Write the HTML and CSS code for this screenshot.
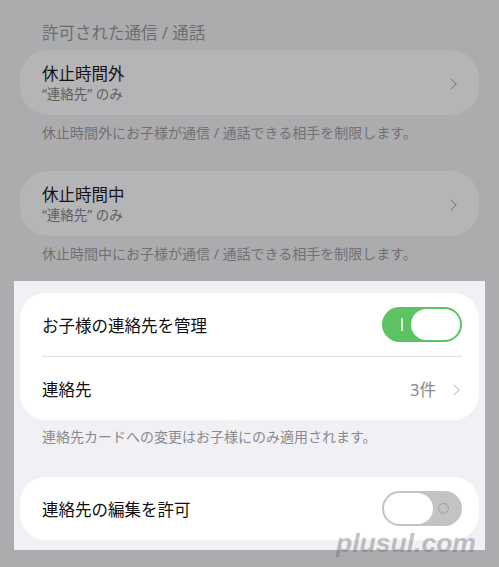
FILE: index.html
```html
<!DOCTYPE html>
<html lang="ja">
  <head>
    <meta charset="UTF-8" />
    <meta name="viewport" content="width=device-width, initial-scale=1.0" />
    <title>通信/通話の制限</title>
    <link rel="stylesheet" href="styles.css">
  </head>

  <body>
    <div class="screen">
      <!-- dimmed part of the settings page -->
      <section class="group dimmed">
        <h2 class="group-title">許可された通信 / 通話</h2>

        <div class="card nav-card">
          <div class="card-text">
            <div class="card-title">休止時間外</div>
            <div class="card-sub">“連絡先” のみ</div>
          </div>
          <span class="chevron"></span>
        </div>
        <p class="note">休止時間外にお子様が通信 / 通話できる相手を制限します。</p>

        <div class="card nav-card second">
          <div class="card-text">
            <div class="card-title">休止時間中</div>
            <div class="card-sub">“連絡先” のみ</div>
          </div>
          <span class="chevron"></span>
        </div>
        <p class="note">休止時間中にお子様が通信 / 通話できる相手を制限します。</p>
      </section>

      <!-- highlighted part -->
      <section class="group focus">
        <ul class="card list">
          <li class="row">
            <span class="row-label">お子様の連絡先を管理</span>
            <span class="switch on"><span class="knob"></span></span>
          </li>
          <li class="row">
            <span class="row-label">連絡先</span>
            <span class="row-value">3件</span>
            <span class="chevron light"></span>
          </li>
        </ul>
        <p class="note">連絡先カードへの変更はお子様にのみ適用されます。</p>

        <ul class="card list second">
          <li class="row">
            <span class="row-label">連絡先の編集を許可</span>
            <span class="switch off"><span class="knob"></span></span>
          </li>
        </ul>
      </section>

      <div class="watermark">plusul.com</div>
    </div>
  </body>
</html>
```

FILE: styles.css
```css
* {
  box-sizing: border-box;
}

body {
  margin: 0;
  background: #acacae;
  font-family: "Noto Sans", "Noto Sans CJK JP", sans-serif;
}

.screen {
  position: relative;
  width: 499px;
  height: 567px;
  overflow: hidden;
  padding: 22px 14px 0 14px;
}

.group {
  padding: 0 6px;
}

.group-title {
  margin: 0 0 6px 0;
  padding-left: 22px;
  font-size: 16.5px;
  line-height: 22px;
  font-weight: 400;
  color: #6c6c6f;
}

.card {
  background: white;
  border-radius: 28px;
}

.nav-card {
  display: flex;
  align-items: center;
  height: 65px;
  padding: 0 20px 0 22px;
}

.nav-card.second {
  margin-top: 28px;
}

.card-text {
  flex: 1;
}

.card-title {
  font-size: 16.5px;
  line-height: 22px;
  color: #151515;
}

.card-sub {
  font-size: 13.5px;
  line-height: 18px;
  color: #5d5d60;
}

.note {
  margin: 8px 0 0 0;
  padding-left: 22px;
  font-size: 14px;
  line-height: 20px;
  color: #707073;
}

.chevron {
  width: 8px;
  height: 8px;
  margin-top: 2px;
  border-top: 1.6px solid #818183;
  border-right: 1.6px solid #818183;
  transform: rotate(45deg);
}

.chevron.light {
  border-color: #c4c4c7;
  margin-left: 14px;
  margin-right: 4px;
}

/* dimmed colours */
.dimmed .card {
  background: #b5b5b7;
}

.dimmed .nav-card .chevron {
  margin-right: 4px;
}

.focus {
  margin-top: 17px;
  padding: 12px 6px 10px 6px;
  background: #f0f0f5;
}

.focus .card {
  border-radius: 26px;
}

.focus .note {
  margin-top: 7px;
  color: #8a8a8e;
}

.list {
  margin: 0;
  padding: 0 17px 0 22px;
  list-style: none;
}

.list.second {
  margin-top: 30px;
}

.row {
  display: flex;
  align-items: center;
  height: 63px;
}

.row + .row {
  height: 64px;
  border-top: 1px solid #e3e3e6;
}

.row-label {
  flex: 1;
  font-size: 16.5px;
  color: #111;
}

.row-value {
  font-size: 16.5px;
  color: #8a8a8e;
}

/* switches */
.switch {
  position: relative;
  display: inline-block;
  width: 80px;
  height: 35px;
  border-radius: 18px;
}

.switch .knob {
  position: absolute;
  top: 2px;
  width: 49px;
  height: 31px;
  border-radius: 16px;
  background: white;
}

.switch.on {
  background: #5dc262;
}

.switch.on .knob {
  right: 2px;
}

.switch.on::before {
  content: "";
  position: absolute;
  left: 19px;
  top: 11px;
  width: 2px;
  height: 13px;
  background: #d8f2d9;
}

.switch.off {
  background: #c3c3c6;
}

.switch.off .knob {
  left: 2px;
}

.switch.off::after {
  content: "";
  position: absolute;
  right: 13px;
  top: 12px;
  width: 9px;
  height: 9px;
  border: 1.4px solid #9e9ea1;
  border-radius: 50%;
}

.watermark {
  position: absolute;
  left: 336px;
  top: 528px;
  font-family: "Liberation Sans", sans-serif;
  font-size: 26.5px;
  font-weight: bold;
  font-style: italic;
  color: rgba(110, 110, 112, 0.42);
}
```
